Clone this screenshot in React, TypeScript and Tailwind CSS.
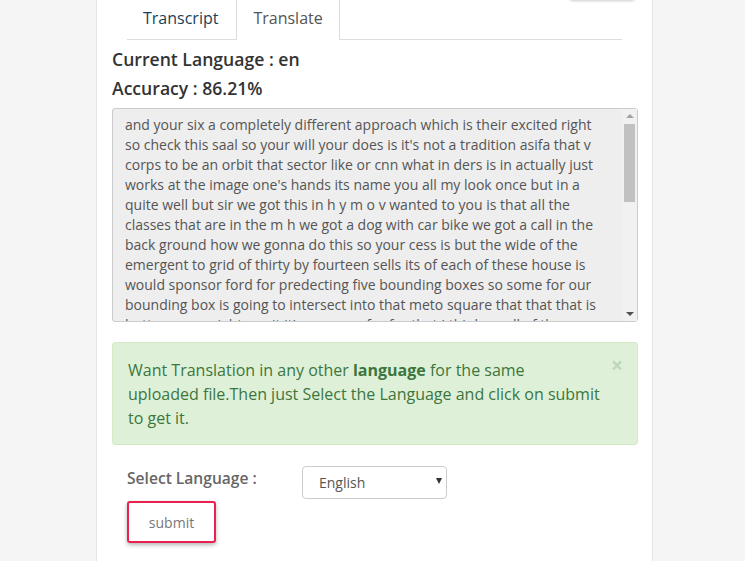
import React, { useState } from "react";

const transcript =
  "and your six a completely different approach which is their excited right so check this saal so your will your does is it's not a tradition asifa that v corps to be an orbit that sector like or cnn what in ders is in actually just works at the image one's hands its name you all my look once but in a quite well but sir we got this in h y m o v wanted to you is that all the classes that are in the m h we got a dog with car bike we got a call in the back ground how we gonna do this so your cess is but the wide of the emergent to grid of thirty by fourteen sells its of each of these house is would sponsor ford for predecting five bounding boxes so some for our bounding box is going to intersect into that meto square that that that is bottom you might see it it's a square for for that I think small of these boxes and so on we have this so good and we want to find out the center of it";

const App: React.FC = () => {
  const [tab, setTab] = useState<string>("translate");
  const [language, setLanguage] = useState<string>("en");
  const [showAlert, setShowAlert] = useState<boolean>(true);

  return (
    <div
      className="min-h-[561px] bg-[#f5f5f5]"
      style={{ fontFamily: '"Open Sans", "Noto Sans", sans-serif' }}
    >
      <div className="ml-[96px] w-[557px] min-h-[561px] bg-white border-x border-[#e3e3e3] relative">
        {/* button sitting above the fold */}
        <div className="absolute right-[17px] top-[-30px] w-[66px] h-[30px] bg-white rounded-b shadow-[0_1px_3px_rgba(0,0,0,0.2)]"></div>

        <div className="px-[15px]">
          {/* Tabs */}
          <div className="ml-[15px] mr-[15px] flex h-[40px] border-b border-[#dddddd]">
            <button
              className={
                tab === "transcript"
                  ? "pl-[16px] pr-[18px] pb-[4px] h-[40px] mb-[-1px] bg-white border-x border-[#dddddd] text-[16px] text-[#555555]"
                  : "pl-[16px] pr-[18px] pb-[4px] h-[40px] text-[16px] text-[#1b3f57]"
              }
              onClick={() => setTab("transcript")}
            >
              Transcript
            </button>
            <button
              className={
                tab === "translate"
                  ? "pl-[16px] pr-[16px] pb-[4px] h-[40px] mb-[-1px] bg-white border-x border-[#dddddd] text-[16px] text-[#555555]"
                  : "pl-[16px] pr-[16px] pb-[4px] h-[40px] text-[16px] text-[#1b3f57]"
              }
              onClick={() => setTab("translate")}
            >
              Translate
            </button>
          </div>

          <h3 className="mt-[5px] text-[17.6px] leading-[29px] font-semibold text-[#333333]">
            Current Language : {language}
          </h3>
          <h3 className="text-[17.6px] leading-[29px] font-semibold text-[#333333]">
            Accuracy : 86.21%
          </h3>

          {/* Transcript text */}
          <div className="mt-[5px] flex w-[526px] h-[214px] bg-[#eeeeee] border border-[#cccccc] rounded-[3px]">
            <div className="flex-1 overflow-hidden pl-[12px] pr-[14px] py-[6px] text-[14px] leading-[20px] text-[#555555]">
              {transcript}
            </div>
            <div className="w-[15px] flex flex-col items-center bg-[#f1f1f1]">
              <span className="mt-[5px] w-0 h-0 border-x-[4px] border-x-transparent border-b-[4px] border-b-[#a3a3a3]"></span>
              <div className="mt-[6px] w-[11px] h-[78px] bg-[#c1c1c1]"></div>
              <div className="flex-1"></div>
              <span className="mb-[5px] w-0 h-0 border-x-[4px] border-x-transparent border-t-[4px] border-t-[#505050]"></span>
            </div>
          </div>

          {/* Alert */}
          {showAlert && (
            <div className="mt-[20px] w-[526px] bg-[#dff0d8] border border-[#d6e9c6] rounded-[3px] pl-[15px] pr-[30px] pt-[15px] pb-[14px] text-[16px] leading-[24px] text-[#3c763d] relative">
              <button
                className="absolute right-[14px] top-[12px] text-[21px] leading-[21px] font-bold text-[#3c763d] opacity-20"
                onClick={() => setShowAlert(false)}
              >
                ×
              </button>
              Want Translation in any other <b className="font-bold">language</b> for the same
              <br />
              uploaded file.Then just Select the Language and click on submit to get it.
            </div>
          )}

          {/* Select language */}
          <div className="mt-[21px] ml-[15px] flex items-start">
            <label className="w-[175px] mt-[1px] text-[15.6px] leading-[22px] font-semibold text-[#666666]">
              Select Language :
            </label>
            <div className="relative">
              <select
                value={language}
                onChange={(e) => setLanguage(e.target.value)}
                className="appearance-none w-[145px] h-[33px] border border-[#cccccc] rounded-[4px] bg-white pl-[16px] text-[14px] text-[#555555] outline-none"
                style={{ fontFamily: '"Open Sans", "Noto Sans", sans-serif' }}
              >
                <option value="en">English</option>
                <option value="hi">Hindi</option>
                <option value="fr">French</option>
                <option value="de">German</option>
              </select>
              <span className="pointer-events-none absolute right-[5px] top-[12px] w-0 h-0 border-x-[3.5px] border-x-transparent border-t-[6px] border-t-[#333333]"></span>
            </div>
          </div>
          <button className="mt-[2px] ml-[15px] w-[89px] h-[42px] border-2 border-[#e8214f] rounded-[3px] bg-white shadow-[0_2px_4px_rgba(0,0,0,0.3)] text-[14px] text-[#777777]">
            submit
          </button>
        </div>
      </div>
    </div>
  );
};

export default App;
